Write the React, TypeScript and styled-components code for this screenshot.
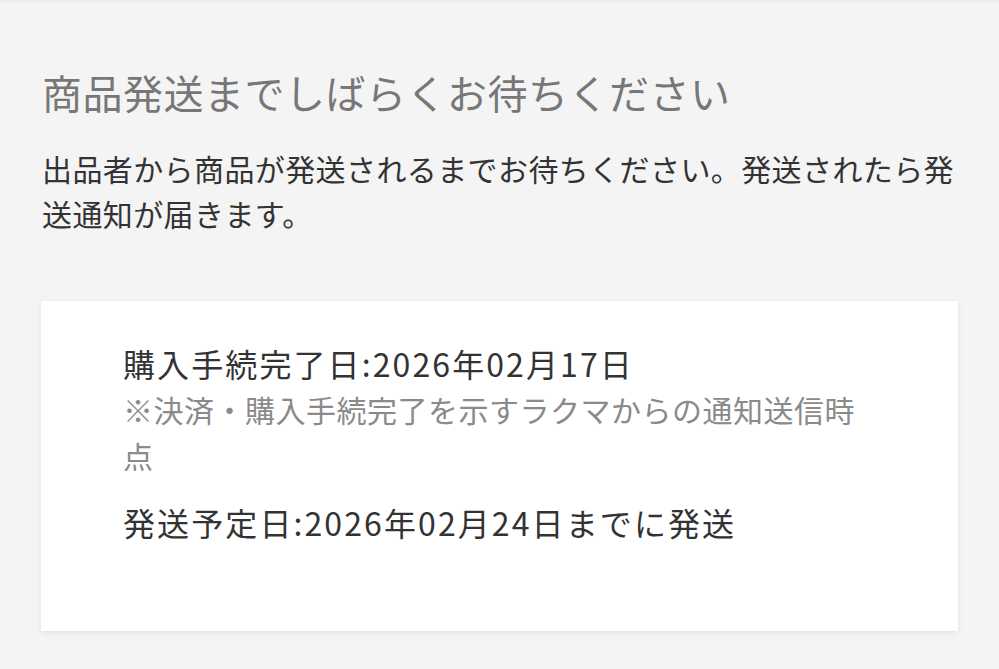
import React from "react";
import styled, { createGlobalStyle } from "styled-components";

const GlobalStyle = createGlobalStyle`
  html, body {
    margin: 0;
    padding: 0;
    background: #f4f4f4;
  }
  body {
    font-family: "Noto Sans CJK JP", "Noto Sans", sans-serif;
    -webkit-font-smoothing: antialiased;
  }
`;

const Page = styled.main`
  min-height: 669px;
  box-sizing: border-box;
  padding: 68px 41px 40px 42px;
  background: #f4f4f4;
  box-shadow: inset 0 3px 4px -2px rgba(0, 0, 0, 0.06);
  display: flex;
  flex-direction: column;
`;

const Title = styled.h1`
  margin: 0;
  font-size: 40px;
  line-height: 48px;
  font-weight: 400;
  letter-spacing: 0.5px;
  color: #777777;
  white-space: nowrap;
`;

const Lead = styled.p`
  margin: 30px 0 0;
  font-size: 30px;
  line-height: 45px;
  font-weight: 400;
  letter-spacing: 0.4px;
  color: #333333;
`;

const Card = styled.section`
  margin: 65px 0 0 -1px;
  background: #ffffff;
  box-shadow: 0 2px 6px rgba(0, 0, 0, 0.07);
  padding: 39px 82px 86px 82px;
  display: flex;
  flex-direction: column;
`;

const DateLine = styled.p<{ $gap?: number }>`
  margin: ${(p) => p.$gap ?? 0}px 0 0;
  font-size: 32px;
  line-height: 46px;
  font-weight: 400;
  letter-spacing: 2.1px;
  color: #333333;
  white-space: nowrap;
`;

const Note = styled.p`
  margin: 0;
  font-size: 30px;
  line-height: 46px;
  font-weight: 400;
  letter-spacing: 0.5px;
  color: #8a8a8a;
`;

export default function App() {
  return (
    <>
      <GlobalStyle />
      <Page>
        <Title>商品発送までしばらくお待ちください</Title>
        <Lead>
          出品者から商品が発送されるまでお待ちください。発送されたら発送通知が届きます。
        </Lead>
        <Card>
          <DateLine>購入手続完了日:2026年02月17日</DateLine>
          <Note>※決済・購入手続完了を示すラクマからの通知送信時点</Note>
          <DateLine $gap={21}>発送予定日:2026年02月24日までに発送</DateLine>
        </Card>
      </Page>
    </>
  );
}
